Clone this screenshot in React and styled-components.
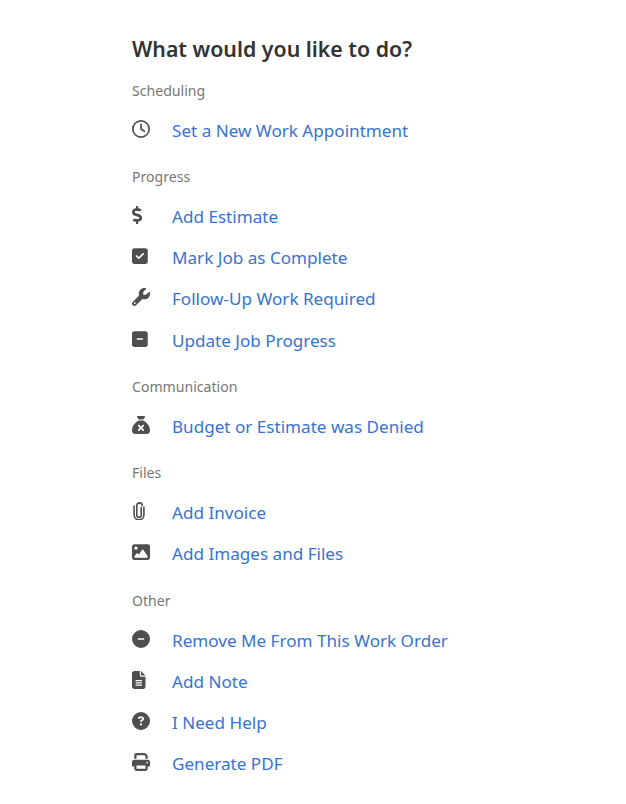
import React from "react";
import styled, { createGlobalStyle } from "styled-components";
import { FaDollarSign } from "react-icons/fa";
import { FaRegClock, FaSquareCheck, FaWrench, FaSquareMinus, FaImage, FaCircleMinus, FaFileLines, FaCircleQuestion, FaPrint, FaSackXmark } from "react-icons/fa6";

const Global = createGlobalStyle`
  html, body { margin: 0; padding: 0; background: #fff; }
  body { font-family: "Noto Sans", "Open Sans", sans-serif; }
`;
const Page = styled.div`
  width: 626px; height: 804px; overflow: hidden; box-sizing: border-box;
  padding: 32px 132px 0;
`;
const Title = styled.h1`
  margin: 0 0 15px; font-size: 21.3px; line-height: 33px; font-weight: 600; color: #333;
  white-space: nowrap;
`;
const Section = styled.section`
  margin-bottom: 15.4px;
`;
const Label = styled.div`
  font-size: 14.1px; line-height: 21px; color: #777; margin-bottom: 8.6px;
`;
const Row = styled.div`
  display: flex; align-items: center; height: 41.25px;
`;
const IconSlot = styled.span`
  width: 40px; flex: none; display: flex; align-items: center; color: #4f4f4f;
  margin-top: -3px;
  svg { display: block; width: 18px; height: 18px; }
`;
const Action = styled.a`
  font-size: 17.1px; color: #3673d2; white-space: nowrap; text-decoration: none;
`;

const Paperclip = (props) => (
  <svg viewBox="-1 0 13 18" fill="none" stroke="currentColor" strokeWidth="1.6" strokeLinecap="round" {...props}>
    <path d="M8.2 5.5v7.7a2.2 2.2 0 0 1-4.4 0V3.6a2.7 2.7 0 0 1 5.4 0" />
    <path d="M10.9 5v8a4.9 4.9 0 0 1-9.8 0V4" />
  </svg>
);

const sections = [
  ["Scheduling", [[FaRegClock, "Set a New Work Appointment"]]],
  ["Progress", [[FaDollarSign, "Add Estimate"], [FaSquareCheck, "Mark Job as Complete"], [FaWrench, "Follow-Up Work Required"], [FaSquareMinus, "Update Job Progress"]]],
  ["Communication", [[FaSackXmark, "Budget or Estimate was Denied"]]],
  ["Files", [[Paperclip, "Add Invoice"], [FaImage, "Add Images and Files"]]],
  ["Other", [[FaCircleMinus, "Remove Me From This Work Order"], [FaFileLines, "Add Note"], [FaCircleQuestion, "I Need Help"], [FaPrint, "Generate PDF"]]],
];

export default function App() {
  return (
    <Page>
      <Global />
      <Title>What would you like to do?</Title>
      {sections.map(([label, items]) => (
        <Section key={label}>
          <Label>{label}</Label>
          {items.map(([Icon, text]) => (
            <Row key={text}>
              <IconSlot><Icon preserveAspectRatio="xMinYMid" /></IconSlot>
              <Action>{text}</Action>
            </Row>
          ))}
        </Section>
      ))}
    </Page>
  );
}
